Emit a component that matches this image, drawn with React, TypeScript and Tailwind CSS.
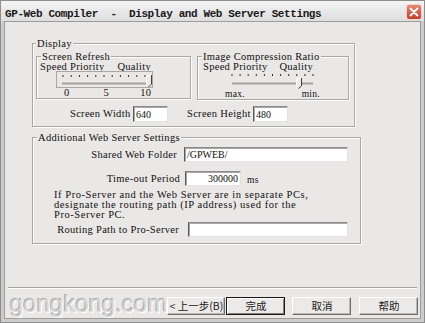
import React from "react";

function Group({
  label,
  className,
  legendClass,
  children,
}: {
  label: string;
  className: string;
  legendClass: string;
  children?: React.ReactNode;
}) {
  return (
    <div
      className={`border border-[#aaa8a5] shadow-[inset_1px_1px_0_#ffffff,1px_1px_0_#ffffff] ${className}`}
    >
      <div
        className={`-mt-[6px] w-fit px-[1px] h-[11px] leading-[11px] bg-[#eae8e6] whitespace-nowrap ${legendClass}`}
      >
        {label}
      </div>
      {children}
    </div>
  );
}

function Field({
  value,
  className,
  right,
}: {
  value?: string;
  className: string;
  right?: boolean;
}) {
  return (
    <div
      className={`h-[15px] bg-white border border-t-[#8a8a8a] border-l-[#5a5a5a] border-r-[#e2e2e2] border-b-[#e2e2e2] shadow-[inset_1px_1px_0_#a8a8a8] flex items-center px-[2px] leading-[13px] text-[10px] tracking-normal ${
        right ? "justify-end" : ""
      } ${className}`}
    >
      {value}
    </div>
  );
}

function Btn({
  label,
  className,
  def,
}: {
  label: string;
  className: string;
  def?: boolean;
}) {
  return (
    <div
      className={`h-[18px] flex items-center justify-center bg-[#eceae8] font-['Noto_Sans_CJK_SC',sans-serif] text-[10.5px] leading-none tracking-normal text-[#202020] ${
        def
          ? "border border-[#1a1a1a] shadow-[inset_1px_1px_0_#ffffff,inset_-1px_-1px_0_#808080]"
          : "border border-t-[#ffffff] border-l-[#ffffff] border-r-[#6e6e6e] border-b-[#6e6e6e] shadow-[inset_-1px_-1px_0_#b8b8b8]"
      } ${className}`}
    >
      {label}
    </div>
  );
}

function RefreshSlider() {
  const ticks = Array.from({ length: 11 }, (_, k) => 7 + k * 8.2);
  return (
    <svg width="97" height="17" viewBox="0 0 97 17" className="block">
      <rect x="0.5" y="0.5" width="96" height="16" fill="none" stroke="#a8a8a8" />
      {ticks.map((x, i) => (
        <line key={i} x1={x} y1="4" x2={x} y2="6" stroke="#303030" strokeWidth="1" />
      ))}
      <rect x="6" y="11.5" width="84" height="2" fill="#a2a2a2" />
      <path d="M90 4 H95.5 V13 L92.5 16 L90 13 Z" fill="#eceae8" />
      <path d="M90.5 13 V4.5 H95" stroke="#ffffff" fill="none" />
      <path d="M95.5 4 V13 L92.5 16" stroke="#404040" fill="none" />
    </svg>
  );
}

function CompressionSlider() {
  const ticks = Array.from({ length: 11 }, (_, k) => 4 + k * 8.1);
  return (
    <svg width="92" height="18" viewBox="0 0 92 18" className="block">
      {ticks.map((x, i) => (
        <line key={i} x1={x} y1="3" x2={x} y2="5" stroke="#303030" strokeWidth="1" />
      ))}
      <rect x="4" y="11.5" width="81" height="2" fill="#a2a2a2" />
      <path d="M68 7 H73.5 V15 L70.5 17.5 L68 15 Z" fill="#eceae8" />
      <path d="M68.5 15 V7.5 H73" stroke="#ffffff" fill="none" />
      <path d="M73.5 7 V15 L70.5 17.5" stroke="#404040" fill="none" />
    </svg>
  );
}

export default function App() {
  return (
    <div className="w-[425px] h-[323px] overflow-hidden flex flex-col bg-[#cccccc] border border-[#8e8e8e] font-['Liberation_Serif',serif] text-[10.5px] tracking-[0.3px] text-[#101010]">
      {/* title bar */}
      <div className="h-[20px] shrink-0 flex items-start pl-[4px] pr-[2px] bg-gradient-to-b from-[#f4f4f4] to-[#dedede]">
        <span className="font-['Liberation_Mono',monospace] font-bold text-[11px] leading-[11px] tracking-[-0.4px] whitespace-pre text-[#1a1a1a] mt-[8px]">
          GP-Web Compiler  -  Display and Web Server Settings
        </span>
        <div className="ml-auto mt-[3px] w-[16px] h-[16px] rounded-[3px] border border-[#f2d2ca] bg-gradient-to-b from-[#e58571] to-[#c0412d] flex items-center justify-center">
          <svg width="10" height="10" viewBox="0 0 10 10">
            <path d="M1.5 1.5 L8.5 8.5 M8.5 1.5 L1.5 8.5" stroke="#ffffff" strokeWidth="1.8" strokeLinecap="round" />
          </svg>
        </div>
      </div>

      {/* body */}
      <div className="flex-1 mx-[3px] mb-[3px] border border-[#9c9c9c] bg-[#eae8e6] flex flex-col">
        {/* Display group */}
        <Group
          label="Display"
          className="mt-[21px] ml-[27px] w-[323px] h-[84px] shrink-0"
          legendClass="ml-[3px]"
        >
          <div className="mt-[7px] ml-[3px] flex items-start gap-[6px]">
            <Group label="Screen Refresh" className="w-[155px] h-[43px]" legendClass="ml-[4px]">
              <div className="ml-[3px] w-[111px] h-[9px] leading-[9px] flex justify-between whitespace-nowrap">
                <span>Speed Priority</span>
                <span>Quality</span>
              </div>
              <div className="ml-[19px]">
                <RefreshSlider />
              </div>
              <div className="h-[10px] leading-[10px] flex whitespace-nowrap">
                <span className="ml-[27px]">0</span>
                <span className="ml-[34px]">5</span>
                <span className="ml-[31px]">10</span>
              </div>
            </Group>
            <Group label="Image Compression Ratio" className="w-[152px] h-[44px]" legendClass="ml-[4px]">
              <div className="ml-[5px] w-[110px] h-[9px] leading-[9px] flex justify-between whitespace-nowrap">
                <span>Speed Priority</span>
                <span>Quality</span>
              </div>
              <div className="ml-[30px]">
                <CompressionSlider />
              </div>
              <div className="ml-[27px] w-[95px] h-[10px] leading-[10px] flex justify-between text-[9.5px]">
                <span>max.</span>
                <span>min.</span>
              </div>
            </Group>
          </div>
          <div className="mt-[6px] h-[16px] flex items-center whitespace-nowrap">
            <span className="ml-[37px] w-[60px]">Screen Width</span>
            <Field value="640" className="ml-[3px] w-[35px] h-[16px]" />
            <span className="ml-[19px] w-[64px]">Screen Height</span>
            <Field value="480" className="ml-[2px] w-[35px] h-[16px]" />
          </div>
        </Group>

        {/* Additional Web Server Settings */}
        <Group
          label="Additional Web Server Settings"
          className="mt-[10px] ml-[27px] w-[329px] h-[107px] shrink-0"
          legendClass="ml-[4px]"
        >
          <div className="mt-[4px] flex items-center whitespace-nowrap">
            <span className="w-[144px] text-right">Shared Web Folder</span>
            <Field value="/GPWEB/" className="ml-[7px] w-[164px]" />
          </div>
          <div className="mt-[7px] flex items-center whitespace-nowrap">
            <span className="w-[147px] text-right">Time-out Period</span>
            <Field value="300000" right className="ml-[5px] w-[56px]" />
            <span className="ml-[6px] mt-[3px] text-[9.5px]">ms</span>
          </div>
          <div className="mt-[3px] ml-[21px] leading-[10px] tracking-[0.55px] whitespace-nowrap">
            If Pro-Server and the Web Server are in separate PCs,
            <br />
            designate the routing path (IP address) used for the
            <br />
            Pro-Server PC.
          </div>
          <div className="mt-[2px] flex items-center whitespace-nowrap">
            <span className="w-[146px] text-right">Routing Path to Pro-Server</span>
            <Field className="ml-[9px] w-[160px]" />
          </div>
        </Group>

        {/* separator */}
        <div className="mt-[43px] mx-[3px] h-[2px] border-t border-t-[#a4a4a4] border-b border-b-[#ffffff] shrink-0" />

        {/* bottom row */}
        <div className="mt-[8px] h-[18px] flex items-center">
          <span className="ml-[5px] -mt-[4px] font-['Liberation_Sans',sans-serif] text-[24px] leading-none tracking-[0px] text-[#d8d8d8] [text-shadow:-1px_-1px_0_#a8a8a8,1px_1px_0_#ffffff]">
            gongkong.com
          </span>
          <div className="ml-auto mr-[4px] flex items-center">
            <Btn label="< 上一步(B)" className="w-[58px]" />
            <Btn label="完成" def className="ml-[1px] w-[59px]" />
            <Btn label="取消" className="ml-[7px] w-[59px]" />
            <Btn label="帮助" className="ml-[8px] w-[59px]" />
          </div>
        </div>
      </div>
    </div>
  );
}
